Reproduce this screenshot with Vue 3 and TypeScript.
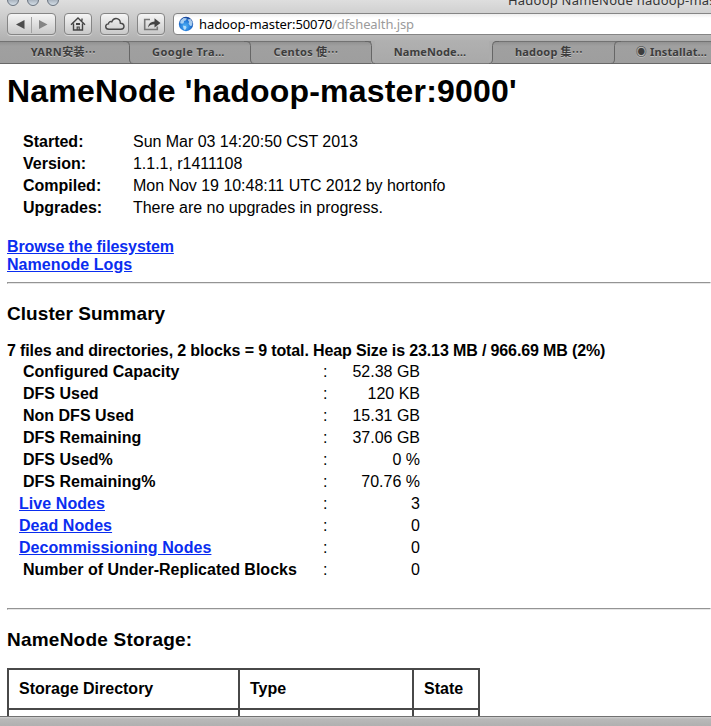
<script setup lang="ts">
interface InfoRow { label: string; value: string }
interface SummaryRow extends InfoRow { link?: boolean }
interface Tab { title: string; kind: 'before' | 'active' | 'after'; width: number; spacing: number; shift: number }

const tabs: Tab[] = [
  { title: 'YARN安装⋯', kind: 'before', width: 129, spacing: 0.35, shift: 2 },
  { title: 'Google Tra…', kind: 'before', width: 121, spacing: 0.45, shift: 2 },
  { title: 'Centos 使⋯', kind: 'before', width: 121, spacing: 0.25, shift: 9 },
  { title: 'NameNode…', kind: 'active', width: 121, spacing: 0.1, shift: 3 },
  { title: 'hadoop 集⋯', kind: 'after', width: 122, spacing: 0.2, shift: 8 },
  { title: '◉ Installat…', kind: 'after', width: 122, spacing: 0.15, shift: 7 },
]

const info: InfoRow[] = [
  { label: 'Started:', value: 'Sun Mar 03 14:20:50 CST 2013' },
  { label: 'Version:', value: '1.1.1, r1411108' },
  { label: 'Compiled:', value: 'Mon Nov 19 10:48:11 UTC 2012 by hortonfo' },
  { label: 'Upgrades:', value: 'There are no upgrades in progress.' },
]

const summary: SummaryRow[] = [
  { label: 'Configured Capacity', value: '52.38 GB' },
  { label: 'DFS Used', value: '120 KB' },
  { label: 'Non DFS Used', value: '15.31 GB' },
  { label: 'DFS Remaining', value: '37.06 GB' },
  { label: 'DFS Used%', value: '0 %' },
  { label: 'DFS Remaining%', value: '70.76 %' },
  { label: 'Live Nodes', value: '3', link: true },
  { label: 'Dead Nodes', value: '0', link: true },
  { label: 'Decommissioning Nodes', value: '0', link: true },
  { label: 'Number of Under-Replicated Blocks', value: '0' },
]
</script>

<template>
  <div class="window">
    <header class="chrome">
      <div class="titlebar">
        <div class="lights"><i></i><i></i><i></i></div>
        <div class="title">Hadoop NameNode hadoop-mas</div>
      </div>
      <div class="toolbar">
        <div class="btn nav">
          <svg width="48" height="20" viewBox="0 0 48 20">
            <path d="M8 10.500 16.500 6v9z" fill="#4c4c4c" />
            <path d="M23.500 3v16" stroke="#a2a2a2" />
            <path d="M39.500 10.500 31 6v9z" fill="#858585" />
          </svg>
        </div>
        <div class="btn home">
          <svg width="26" height="20" viewBox="0 0 26 20" fill="none" stroke="#444" stroke-width="1.4">
            <path d="M6 10.7 13 4l7 6.700M8.500 9.500V16h9V9.500M17 6.800V4.500" />
            <path d="M11 9h4v2h-4z" fill="#444" stroke="none" />
            <path d="M12.200 16v-3h2v3" stroke-width="1.2" />
          </svg>
        </div>
        <div class="btn cloud">
          <svg width="28" height="20" viewBox="0 0 28 20" fill="none" stroke="#484848" stroke-width="1.4">
            <path d="M8 15.300C5.800 15.300 4.700 14 4.700 12.500S6 10 7.500 9.900C7.400 8 9.500 7 10.800 7.800 11.500 5.700 13 4.500 15 4.500c2.600 0 4.500 2 4.300 4.700 2.300.1 3.700 1.300 3.700 3.100 0 1.900-1.400 3-3.300 3z" />
          </svg>
        </div>
        <div class="btn share">
          <svg width="27" height="20" viewBox="0 0 27 20">
            <path d="M12 5.500H6.700v10h12.600V12.500" fill="none" stroke="#777" stroke-width="1.600" />
            <path d="M10 13.500C10.500 9.500 13 7.500 16.500 7.400V4.200L22.500 9l-6 4.500v-3.200C13.500 10.300 11.500 11 10 13.500z" fill="#444" />
          </svg>
        </div>
        <div class="address">
          <svg class="globe" width="16" height="16" viewBox="0 0 16 16">
            <defs>
              <radialGradient id="sea" cx="45%" cy="65%" r="65%">
                <stop offset="0" stop-color="#51b5fa" />
                <stop offset=".6" stop-color="#2277d5" />
                <stop offset="1" stop-color="#153f94" />
              </radialGradient>
            </defs>
            <circle cx="8" cy="8" r="7.200" fill="url(#sea)" />
            <path d="M2.500 4.500 5.500 2l3.300.3-.7 2-2 .8-.5 2.200-1.600.5-1.800-.5zM9.500 3.500l3-.5 2 3-.3 3.500-2 .5-1.700-2.500.7-1.500zM5 9.500l3 .8.500 1.500-1.500 2.500-1.500-1.500z" fill="#d5edfc" opacity=".75" />
          </svg>
          <span class="url">hadoop-master:50070<span class="path">/dfshealth.jsp</span></span>
        </div>
      </div>
      <nav class="tabs">
        <div
          v-for="tab in tabs"
          :key="tab.title"
          class="tab"
          :class="tab.kind"
          :style="{ width: tab.width + 'px', letterSpacing: tab.spacing + 'px', paddingRight: tab.shift + 'px' }"
        >
          <svg v-if="tab.kind === 'before'" class="edge" width="10" height="23" viewBox="0 0 10 23">
            <path v-if="tab.title.startsWith('Centos')" d="M6 0H10V22H8Q6.500 21 6.500 18z" fill="#acacac" />
            <path d="M0 .5H3Q6.500 .5 6.500 4.500V18Q6.500 22.500 10 22.500" fill="none" stroke="#666" />
          </svg>
          <svg v-if="tab.kind === 'after'" class="edge" width="10" height="23" viewBox="0 0 10 23">
            <path v-if="tab.title.startsWith('hadoop')" d="M0 0H7Q3.500 1 3.500 5V18Q3.500 22 0 22z" fill="#acacac" />
            <path d="M10 .5H7Q3.500 .5 3.500 4.500V18Q3.500 22.500 0 22.500" fill="none" stroke="#666" />
          </svg>
          <span>{{ tab.title }}</span>
        </div>
      </nav>
    </header>

    <main class="page">
      <h1>NameNode 'hadoop-master:9000'</h1>
      <dl class="info">
        <div v-for="row in info" :key="row.label" class="info-row">
          <dt>{{ row.label }}</dt>
          <dd>{{ row.value }}</dd>
        </div>
      </dl>
      <div class="links">
        <a class="browse">Browse the filesystem</a>
        <a>Namenode Logs</a>
      </div>
      <hr />
      <h3>Cluster Summary</h3>
      <p class="totals">7 files and directories, 2 blocks = 9 total. Heap Size is 23.13 MB / 966.69 MB (2%)</p>
      <div class="summary">
        <div v-for="row in summary" :key="row.label" class="summary-row">
          <a v-if="row.link" class="name">{{ row.label }}</a>
          <span v-else class="name plain">{{ row.label }}</span>
          <span>:</span>
          <span class="value">{{ row.value }}</span>
        </div>
      </div>
      <hr />
      <h3 class="storage-title">NameNode Storage:</h3>
      <div class="storage">
        <div>Storage Directory</div>
        <div>Type</div>
        <div>State</div>
        <div></div>
        <div></div>
        <div></div>
      </div>
    </main>
    <footer class="statusbar"></footer>
  </div>
</template>

<style>
body {
  margin: 0;
  overflow: hidden;
}
</style>

<style scoped>
.window {
  display: flex;
  flex-direction: column;
  width: 711px;
  height: 726px;
  overflow: hidden;
  background: #fff;
  color: #000;
  font-family: "Liberation Sans", Arial, sans-serif;
  font-size: 16px;
}
.chrome {
  flex: none;
  height: 64px;
  overflow: hidden;
  background: linear-gradient(#dedede, #cbcbcb 18px, #b0b0b0 41px, #a9a9a9 63px, #f4f4f4 63px);
  font-family: "Noto Sans", "Noto Sans CJK SC", sans-serif;
}
.titlebar {
  display: flex;
  height: 13px;
}
.lights {
  display: flex;
  flex: none;
  gap: 8px;
  width: 501px;
  box-sizing: border-box;
  padding-left: 7px;
  margin: -6px 7px 0 0;
}
.lights i {
  width: 10px;
  height: 10px;
  border: 1px solid #68727e;
  border-radius: 50%;
  background: linear-gradient(#7d8794, #d5dfe8);
}
.title {
  margin-top: -9px;
  color: #353535;
  font-size: 13px;
  line-height: 18px;
  letter-spacing: 0.22px;
  white-space: nowrap;
}
.toolbar {
  display: flex;
  height: 28px;
  box-sizing: border-box;
  border-bottom: 1px solid transparent;
}
.btn {
  box-sizing: border-box;
  height: 22px;
  border: 1px solid #858585;
  border-radius: 4px;
  background: linear-gradient(#f5f5f5, #c9c9c9);
  box-shadow: 0 1px 0 #d8d8d8;
}
.btn svg {
  display: block;
}
.nav { width: 49px; margin-left: 7px; }
.home { width: 28px; margin-left: 8px; }
.cloud { width: 29px; margin-left: 8px; }
.share { width: 28px; margin-left: 8px; }
.address {
  display: flex;
  box-sizing: border-box;
  width: 540px;
  height: 22px;
  margin-left: 8px;
  flex: none;
  padding: 2px 0 0 5px;
  border: 1px solid #858585;
  border-radius: 4px 0 0 4px;
  background: linear-gradient(#eee, #fff 4px);
}
.globe {
  flex: none;
  margin: 0 5px 0 -1px;
}
.url {
  font-size: 13px;
  line-height: 17px;
  letter-spacing: -0.1px;
  white-space: nowrap;
}
.path {
  color: #9b9b9b;
}
.tabs {
  display: flex;
  width: 736px;
  height: 23px;
}
.tab {
  position: relative;
  flex: none;
  box-sizing: border-box;
  height: 23px;
  border-top: 1px solid #737373;
  border-bottom: 1px solid #686868;
  background: linear-gradient(#929292, #a0a0a0 4px, #9e9e9e);
  color: #3d3d3d;
  font-size: 11px;
  font-weight: 700;
  line-height: 20px;
  text-align: center;
  white-space: nowrap;
  text-shadow: 0 1px 0 #c2c2c2;
}
.tab.active {
  border-color: transparent;
  border-bottom-color: #777;
  background: transparent;
}
.edge {
  position: absolute;
  top: -1px;
}
.before .edge { right: -4px; z-index: 1; }
.after .edge { left: -3px; z-index: 1; }
.page {
  flex: 1;
  min-height: 0;
  overflow: hidden;
  padding-left: 7px;
}
h1 {
  margin: 9px 0 21px;
  font-size: 32px;
  line-height: 37px;
  letter-spacing: 0.19px;
}
.info {
  margin: 0 0 19px;
  padding-left: 16px;
}
.info-row {
  display: flex;
  height: 22px;
  line-height: 22px;
}
dt {
  width: 110px;
  font-weight: 700;
}
dd {
  margin: 0;
  letter-spacing: -0.03px;
}
.links {
  display: flex;
  flex-direction: column;
  align-items: flex-start;
  line-height: 18px;
}
a {
  color: #0a2df0;
  font-weight: 700;
  text-decoration: underline;
  letter-spacing: 0.06px;
}
.browse {
  letter-spacing: -0.1px;
}
hr {
  height: 2px;
  box-sizing: border-box;
  margin: 8px 0 0;
  border: 1px solid;
  border-color: #949494 transparent #e6e6e6 #949494;
}
h3 {
  margin: 18px 0 0;
  font-size: 19px;
  line-height: 24px;
  letter-spacing: 0.06px;
}
.storage-title {
  letter-spacing: 0.22px;
}
.totals {
  margin: 15px 0 0;
  height: 20px;
  font-weight: 700;
  line-height: 19px;
  letter-spacing: -0.125px;
}
.summary-row {
  display: grid;
  grid-template-columns: 304px 20px 77px;
  height: 22px;
  padding-left: 12px;
  line-height: 22px;
}
.name {
  justify-self: start;
  font-weight: 700;
}
.plain {
  padding-left: 4px;
}
.value {
  text-align: right;
}
.summary + hr {
  margin-top: 27px;
}
.storage {
  display: grid;
  grid-template-columns: 231px 174px 66px;
  width: 471px;
  margin-top: 16px;
  border: solid;
  border-width: 2px 0 0 2px;
  border-color: #484848;
  font-weight: 700;
  line-height: 38px;
}
.storage div {
  box-sizing: border-box;
  height: 40px;
  padding-left: 10px;
  border-right: 2px solid #484848;
  border-bottom: 2px solid #484848;
}
.statusbar {
  flex: none;
  height: 9px;
  border-top: 1px solid #717171;
  background: linear-gradient(#d0d0d0, #b9b9b9 2px, #b0b0b0);
}
</style>
